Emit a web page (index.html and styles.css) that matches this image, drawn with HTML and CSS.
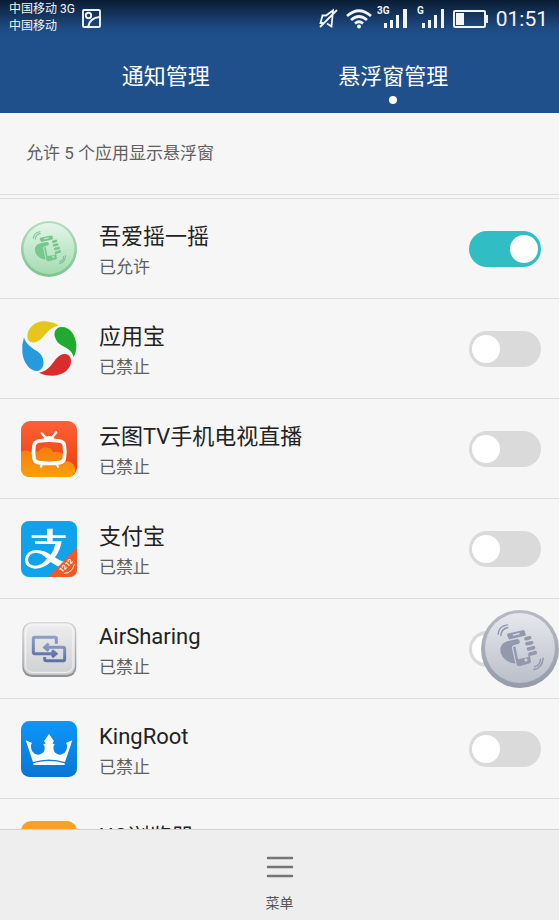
FILE: index.html
```html
<!DOCTYPE html>
<html lang="zh-CN">
<head>
<meta charset="utf-8">
<meta name="viewport" content="width=device-width, initial-scale=1">
<title>悬浮窗管理</title>
<link rel="stylesheet" href="styles.css">
</head>
<body>
<svg class="defs" aria-hidden="true">
  <defs>
    <linearGradient id="green" x1="0" y1="0" x2="0" y2="1"><stop offset="0" stop-color="#e4f5e8"/><stop offset="1" stop-color="#a3dcb0"/></linearGradient>
    <linearGradient id="greenRim" x1="0" y1="0" x2="0" y2="1"><stop offset="0" stop-color="#b4dcbf"/><stop offset="1" stop-color="#7cc48e"/></linearGradient>
    <linearGradient id="grey" x1="0" y1="0" x2="0" y2="1"><stop offset="0" stop-color="#e6e8ed"/><stop offset="1" stop-color="#bbbfca"/></linearGradient>
    <linearGradient id="greyRim" x1="0" y1="0" x2="0" y2="1"><stop offset="0" stop-color="#b6bbc5"/><stop offset="1" stop-color="#949baa"/></linearGradient>
    <linearGradient id="tv" x1="0" y1="0" x2="0" y2="1"><stop offset="0" stop-color="#fb6136"/><stop offset="1" stop-color="#ee3c0a"/></linearGradient>
    <linearGradient id="cloud" x1="0" y1="0" x2="0" y2="1"><stop offset="0" stop-color="#f47b10"/><stop offset="1" stop-color="#fba008"/></linearGradient>
    <linearGradient id="king" x1="0" y1="0" x2="0" y2="1"><stop offset="0" stop-color="#0d96fb"/><stop offset="1" stop-color="#0876d3"/></linearGradient>
    <linearGradient id="air" x1="0" y1="0" x2="0" y2="1"><stop offset="0" stop-color="#eeeeef"/><stop offset="1" stop-color="#cfd0d2"/></linearGradient>
    <linearGradient id="airRim" x1="0" y1="0" x2="0" y2="1"><stop offset="0" stop-color="#cfcfd0"/><stop offset="1" stop-color="#919294"/></linearGradient>
    <linearGradient id="airLine" x1="0" y1="0" x2="0" y2="1"><stop offset="0" stop-color="#8c9dc6"/><stop offset="1" stop-color="#5d71a4"/></linearGradient>
    <symbol id="shake" viewBox="66 28 236 236">
      <g fill="currentColor">
        <path fill-rule="evenodd" d="M148 99L192 89Q198 88 199 94L202 105L151 117L145 105Q144 100 148 99ZM162 102L182 97L183 101L163 106Z"/>
        <path d="M148 122L176 116Q185 117 183 126L181 130L164 135Q158 138 160 145L170 190Q150 189 136 175Q122 160 125 142Q130 126 148 122Z"/>
        <path fill-rule="evenodd" d="M163 140L170 138L178 177L210 170L208 158L214 166L217 184Q217 189 212 190L182 198Q177 199 174 193ZM197 179A5 5 0 1 0 207 179A5 5 0 1 0 197 179Z"/>
      </g>
      <g fill="none" stroke="currentColor" stroke-linecap="round">
        <path stroke-width="11" d="M202 115L213 112M205 130L219 127M210 146L225 142M215 161L230 157"/>
        <path stroke-width="4.500" d="M118 101Q120 76 146 73M126 105Q128 85 147 81M226 208Q252 203 254 174M228 200Q245 195 246 177"/>
      </g>
    </symbol>
  </defs>
</svg>

<div class="screen">
  <header class="top">
    <div class="status">
      <div class="carriers"><span>中国移动 3G</span><span>中国移动</span></div>
      <svg class="shot" width="20" height="20" viewBox="0 0 20 20" fill="none" stroke="currentColor" stroke-width="1.900" aria-hidden="true"><rect x="1" y="1" width="17" height="17" rx="1"/><circle cx="6.500" cy="6.500" r="2.700"/><path d="M6 18C7 12 11 8.500 18 8"/></svg>
      <div class="indicators">
        <svg width="20" height="22" viewBox="0 0 20 22" fill="none" stroke="currentColor" stroke-width="1.800" aria-hidden="true"><path d="M5 15H2.500L4.500 7.500H8L15 2.500L13.500 18.500L9 15.500M19 2L2 19"/></svg>
        <svg class="wifi" width="26" height="20" viewBox="0 0 26 20" fill="none" stroke="currentColor" stroke-width="2.700" aria-hidden="true"><path d="M1 7Q13 -3.500 25 7M5 11Q13 4 21 11M9 14.500Q13 11 17 14.500"/><circle cx="13" cy="17.500" r="2" fill="currentColor" stroke="none"/></svg>
        <svg class="signal" width="31" height="24" viewBox="0 0 31 24" fill="currentColor" role="img" aria-label="3G"><text x="0" y="9">3G</text><path d="M7 18h3v5H7zM13 15h3v8h-3zM19 10h3v13h-3zM26 4h4v19h-4z"/></svg>
        <svg class="signal second" width="28" height="24" viewBox="0 0 28 24" fill="currentColor" role="img" aria-label="G"><text x="0" y="9">G</text><path d="M5 18h3v5H5zM11 15h3v8h-3zM17 10h3v13h-3zM24 4h3v19h-3z"/></svg>
        <svg class="battery" width="35" height="18" viewBox="0 0 35 18" aria-hidden="true"><rect x="1" y="1" width="31" height="16" rx="1" fill="none" stroke="currentColor" stroke-width="2"/><path d="M3 3h8v12H3zM33 5h2v8h-2z" fill="currentColor"/></svg>
        <time>01:51</time>
      </div>
    </div>
    <nav class="tabs">
      <a href="#notify">通知管理</a>
      <a href="#float" class="active" aria-current="page">悬浮窗管理</a>
    </nav>
  </header>

  <main class="content">
    <p class="summary">允许 5 个应用显示悬浮窗</p>
    <ul class="apps">
      <li>
        <svg class="icon" viewBox="0 0 56 56" aria-hidden="true"><circle cx="28" cy="28" r="28" fill="url(#greenRim)"/><circle cx="28" cy="27.500" r="25.500" fill="url(#green)"/><use href="#shake" width="56" height="56" color="#76c790"/></svg>
        <label for="app1"><span class="name">吾爱摇一摇</span><span class="state">已允许</span></label>
        <input id="app1" class="switch" type="checkbox" role="switch" checked>
      </li>
      <li>
        <svg class="icon" viewBox="34 30 168 168" aria-hidden="true"><path fill="#e8c51b" d="M53 78C52 50 78 28 108 31Q134 34 147 44C125 47 112 64 97 81C86 94 70 97 61 92Q53 87 53 78Z"/><path fill="#21ab2e" d="M137 81C130 64 138 49 155 48C181 47 197 72 200 100Q201 122 192 139C188 120 174 112 154 102Q141 94 137 81Z"/><path fill="#d92c2c" d="M184 151C184 174 161 193 130 194Q103 194 88 185C112 182 123 165 138 145C150 129 165 126 175 131Q184 137 184 151Z"/><path fill="#279ade" d="M43 79C48 98 62 108 83 121Q99 132 101 149C104 165 96 177 84 180C61 181 41 155 38 125Q36 100 43 79Z"/></svg>
        <label for="app2"><span class="name">应用宝</span><span class="state">已禁止</span></label>
        <input id="app2" class="switch" type="checkbox" role="switch">
      </li>
      <li>
        <svg class="icon" viewBox="34 30 168 168" aria-hidden="true"><rect x="34" y="30" width="168" height="168" rx="27" fill="url(#tv)"/><path fill="url(#cloud)" d="M34 123Q50 114 65 124Q78 115 86 123Q94 106 112 109Q128 112 130 124Q151 118 163 133Q170 145 169 151Q181 149 190 159Q198 168 197 183Q190 198 175 198H61Q34 198 34 171Z"/><g fill="none" stroke="#fff" stroke-linecap="round"><path stroke-width="11" d="M87 90Q118 85 149 90Q163 92 164 103Q167 122 164 142Q162 153 149 155Q118 160 87 155Q75 153 73 142Q70 122 73 103Q75 92 87 90Z"/><path stroke-width="7" d="M96 67L108 80M140 64L127 80M96 160L94 167M142 160L145 167"/></g><path fill="#fff" d="M101 87Q106 75 118 75Q130 75 135 87Z"/></svg>
        <label for="app3"><span class="name">云图TV手机电视直播</span><span class="state">已禁止</span></label>
        <input id="app3" class="switch" type="checkbox" role="switch">
      </li>
      <li>
        <svg class="icon" viewBox="34 33 168 168" aria-hidden="true"><rect x="34" y="33" width="168" height="168" rx="24" fill="#10a3e9"/><g fill="#fff"><path d="M112 56H129V76H168V84H129V95H112V84H66V76H112Z"/><path fill-rule="evenodd" d="M76 94H156Q152 121 136 142Q156 157 184 160L168 176Q143 171 123 156Q101 176 76 176Q47 174 46 150Q48 122 80 120Q105 121 123 134Q134 120 137 102H76ZM112 146Q96 128 78 128Q56 130 55 150Q57 167 76 167Q96 166 112 146Z"/></g><path fill="#f15a24" d="M202 112V177Q202 201 178 201H116Z"/><text class="sale" transform="translate(157 189) rotate(-45)">1212</text><path d="M164 190Q187 190 194 164" fill="none" stroke="#fff" stroke-width="3" stroke-linecap="round"/></svg>
        <label for="app4"><span class="name">支付宝</span><span class="state">已禁止</span></label>
        <input id="app4" class="switch" type="checkbox" role="switch">
      </li>
      <li>
        <svg class="icon" viewBox="34 33 168 168" aria-hidden="true"><rect x="38" y="37" width="162" height="164" rx="28" fill="url(#airRim)"/><rect x="42" y="40" width="154" height="154" rx="25" fill="url(#air)"/><rect x="48" y="45" width="142" height="142" rx="20" fill="none" stroke="#fff" stroke-width="3" opacity=".7"/><g fill="none" stroke="url(#airLine)" stroke-width="9"><path d="M140 101V86Q140 82 136 82H75Q71 82 71 86V127Q71 131 75 131H138M127 121L139 131L127 141"/><path d="M105 141V147Q105 152 110 152H161Q165 152 165 147V116Q165 112 161 112H106M117 101L105 112L117 122"/></g></svg>
        <label for="app5"><span class="name">AirSharing</span><span class="state">已禁止</span></label>
        <input id="app5" class="switch" type="checkbox" role="switch">
      </li>
      <li>
        <svg class="icon" viewBox="34 33 168 168" aria-hidden="true"><rect x="34" y="33" width="168" height="168" rx="25" fill="url(#king)"/><path fill="#fff" d="M48 91L67 99L64 105C63 121 71 133 84 134C101 133 108 121 104 107L100 104L108 100L103 94L118 72L133 94L128 100L136 104L132 107C129 121 136 133 152 134C166 132 173 121 172 105L169 99L188 91L166 156Q118 141 70 156Z"/><path fill="#fff" d="M71 160Q118 146 165 160V165H71Z"/></svg>
        <label for="app6"><span class="name">KingRoot</span><span class="state">已禁止</span></label>
        <input id="app6" class="switch" type="checkbox" role="switch">
      </li>
      <li>
        <svg class="icon" viewBox="0 0 56 56" aria-hidden="true"><rect width="56" height="56" rx="10" fill="#fba026"/></svg>
        <label for="app7"><span class="name">UC浏览器</span><span class="state">已禁止</span></label>
        <input id="app7" class="switch" type="checkbox" role="switch">
      </li>
    </ul>
  </main>

  <footer class="bottom">
    <button type="button" class="menu">
      <svg width="28" height="24" viewBox="0 0 28 24" fill="none" stroke="#767474" stroke-width="2.600" stroke-linecap="round" aria-hidden="true"><path d="M2 3H26M2 12H26M2 21H26"/></svg>
      <span>菜单</span>
    </button>
  </footer>

  <button type="button" class="floating" aria-label="摇一摇">
    <svg viewBox="0 0 78 78" aria-hidden="true"><circle cx="39" cy="39" r="39" fill="url(#greyRim)"/><circle cx="39" cy="38" r="35" fill="url(#grey)"/><use href="#shake" width="78" height="78" color="#9299ad"/></svg>
  </button>
</div>
</body>
</html>
```
FILE: styles.css
```css
* {
  box-sizing: border-box;
}

body {
  margin: 0;
  font-family: Roboto, "Noto Sans CJK SC", sans-serif;
  color: #222;
  background: #f6f6f6;
}

.defs {
  position: absolute;
  width: 0;
  height: 0;
}

.screen {
  position: relative;
  display: flex;
  flex-direction: column;
  height: 100vh;
  overflow: hidden;
}

.top {
  flex: none;
  color: #fff;
  background: linear-gradient(#0b1c33 0, #133056 12px, #1d4a82 28px, #20508c 40px);
}

.status {
  display: flex;
  align-items: flex-start;
  height: 40px;
  padding: 0 11px 0 9px;
  color: #f1f5f8;
}

.carriers {
  display: flex;
  flex-direction: column;
  padding-top: 1px;
  font-size: 12px;
  line-height: 17px;
}

.shot {
  margin: 9px 0 0 7px;
}

.indicators {
  display: flex;
  align-items: center;
  height: 38px;
  margin-left: auto;
}

.wifi {
  margin-left: 8px;
}

.signal {
  margin: 0 0 4px 5px;
  font-size: 10px;
  font-weight: 700;
}

.second {
  margin-left: 9px;
}

.battery {
  margin: 0 8px;
}

.indicators time {
  font-size: 21px;
  line-height: 38px;
}

.tabs {
  display: grid;
  grid-template-columns: 1fr 1fr;
  height: 73px;
  padding: 0 52px;
}

.tabs a {
  display: flex;
  flex-direction: column;
  align-items: center;
  padding-top: 21px;
  color: #fff;
  font-size: 22px;
  line-height: 32px;
  text-decoration: none;
}

.tabs .active::after {
  content: "";
  width: 8px;
  height: 8px;
  margin-top: 3px;
  border-radius: 50%;
  background: #fff;
}

.content {
  flex: 1;
  min-height: 0;
  overflow-y: auto;
  scrollbar-width: none;
}

.summary {
  height: 82px;
  margin: 0;
  padding-left: 26px;
  border-bottom: 1px solid #dcdcdc;
  color: #606060;
  font-size: 17px;
  line-height: 80px;
}

.apps {
  margin: 3px 0 0;
  padding: 0;
  border-top: 1px solid #dcdcdc;
  list-style: none;
}

.apps li {
  display: flex;
  align-items: center;
  height: 100px;
  padding: 0 18px 0 21px;
  border-bottom: 1px solid #dedede;
}

.icon {
  flex: none;
  width: 56px;
  height: 56px;
}

.sale {
  fill: #fff;
  font-size: 21px;
  font-weight: 700;
}

.apps label {
  display: flex;
  flex: 1;
  flex-direction: column;
  margin-left: 22px;
  padding-top: 4px;
}

.name {
  font-size: 22px;
  line-height: 32px;
}

.state {
  color: #606060;
  font-size: 17px;
  line-height: 28px;
}

.switch {
  appearance: none;
  display: flex;
  align-items: center;
  width: 72px;
  height: 36px;
  margin: 0;
  padding: 0 3px;
  border-radius: 18px;
  background: #dadada;
}

.switch::before {
  content: "";
  width: 28px;
  height: 28px;
  border-radius: 50%;
  background: #fff;
}

.switch:checked {
  justify-content: flex-end;
  background: #30bdc3;
}

.bottom {
  display: flex;
  flex: none;
  justify-content: center;
  height: 91px;
  border-top: 1px solid #d2d2d2;
  background: #eee;
}

.menu {
  display: flex;
  flex-direction: column;
  align-items: center;
  gap: 13px;
  padding: 25px 20px 0;
  border: 0;
  background: none;
  color: #555;
  font: inherit;
  font-size: 14px;
  line-height: 22px;
}

.floating {
  position: absolute;
  top: 610px;
  right: 0;
  width: 78px;
  height: 78px;
  padding: 0;
  border: 0;
  border-radius: 50%;
  background: none;
}

.floating svg {
  display: block;
}
```
